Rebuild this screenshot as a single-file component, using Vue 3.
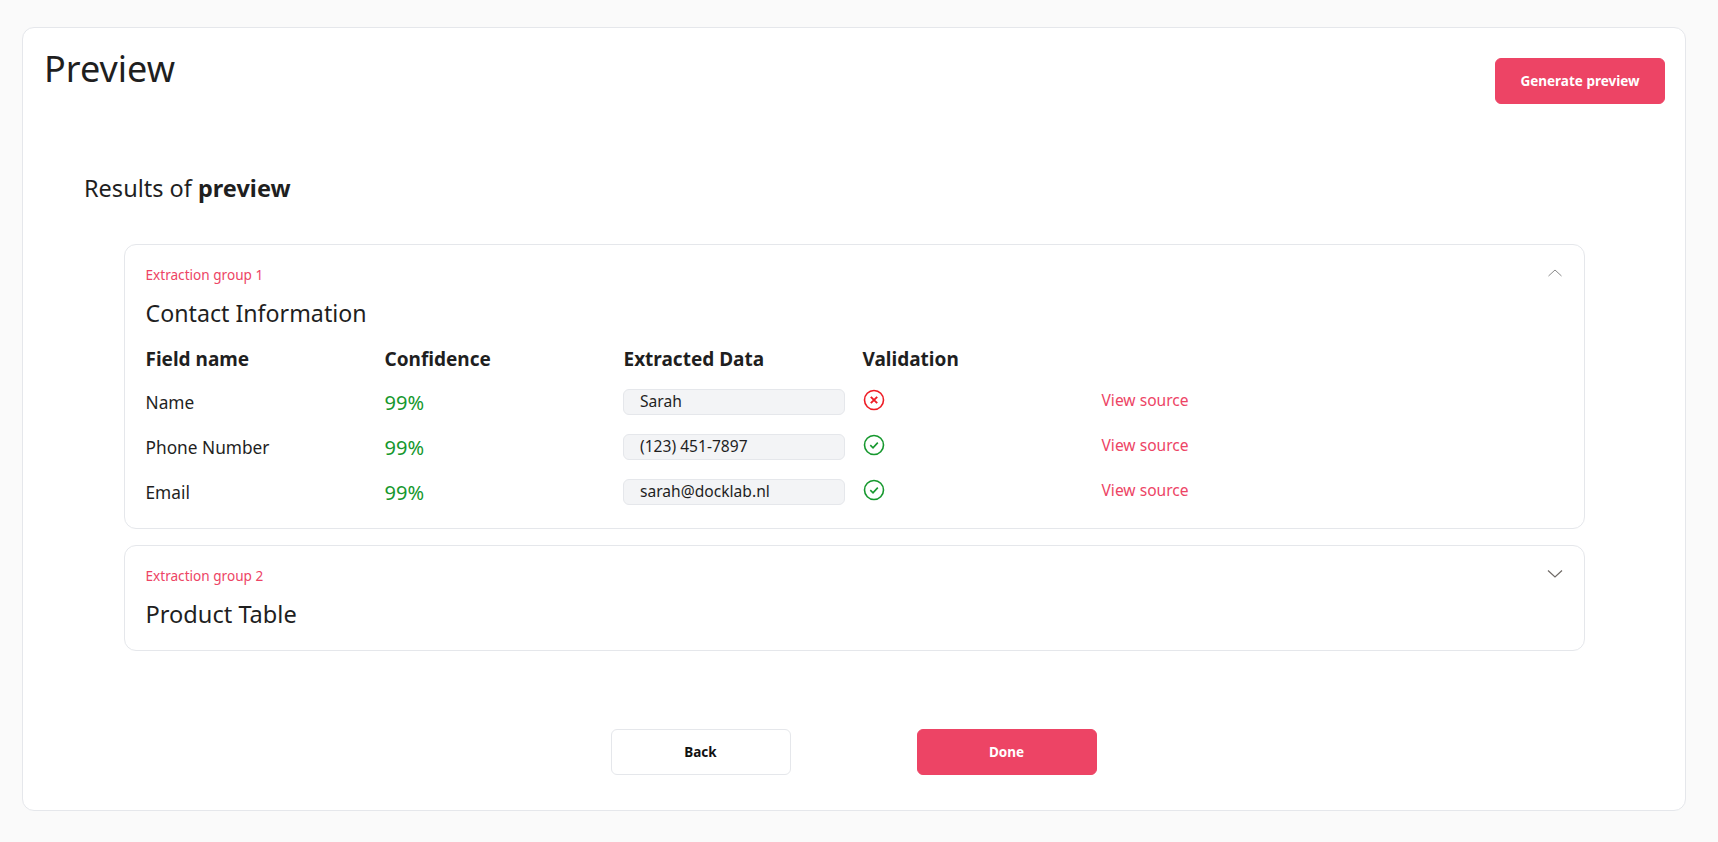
<template>
  <div class="page">
    <div class="card">
      <div class="card__head">
        <h1 class="card__title">Preview</h1>
        <button class="btn btn--primary btn--generate">Generate preview</button>
      </div>

      <div class="results">
        <h2 class="results__title">Results of <b>preview</b></h2>

        <div class="group group--open">
          <div class="group__label">Extraction group 1</div>
          <svg class="group__chevron" width="16" height="10" viewBox="0 0 16 10">
            <path d="M1.5 8 L8 2 L14.5 8" fill="none" stroke="#8a8a8a" stroke-width="1" />
          </svg>
          <div class="group__name">Contact Information</div>

          <div class="table">
            <div class="table__head">Field name</div>
            <div class="table__head">Confidence</div>
            <div class="table__head">Extracted Data</div>
            <div class="table__head">Validation</div>
            <div></div>

            <template v-for="row in rows" :key="row.name">
              <div class="table__name">{{ row.name }}</div>
              <div class="table__conf">{{ row.confidence }}</div>
              <div class="table__value">{{ row.value }}</div>
              <div class="table__valid">
                <svg width="22" height="22" viewBox="0 0 22 22" fill="none">
                  <circle cx="11" cy="11" r="9.5" :stroke="row.ok ? '#16982e' : '#ee1c25'" stroke-width="1.6" />
                  <path v-if="row.ok" d="M7.3 11.2 L10 13.8 L14.8 8.6" stroke="#16982e" stroke-width="1.6" />
                  <path v-else d="M7.8 7.8 L14.2 14.2 M14.2 7.8 L7.8 14.2" stroke="#ee1c25" stroke-width="1.9" />
                </svg>
              </div>
              <a class="table__link">View source</a>
            </template>
          </div>
        </div>

        <div class="group group--closed">
          <div class="group__label">Extraction group 2</div>
          <svg class="group__chevron" width="16" height="10" viewBox="0 0 16 10">
            <path d="M1 1.5 L8 8 L15 1.5" fill="none" stroke="#6f6a66" stroke-width="1.2" />
          </svg>
          <div class="group__name">Product Table</div>
        </div>
      </div>

      <div class="actions">
        <button class="btn btn--ghost">Back</button>
        <button class="btn btn--primary">Done</button>
      </div>
    </div>
  </div>
</template>

<script setup>
const rows = [
  { name: 'Name', confidence: '99%', value: 'Sarah', ok: false },
  { name: 'Phone Number', confidence: '99%', value: '(123) 451-7897', ok: true },
  { name: 'Email', confidence: '99%', value: 'sarah@docklab.nl', ok: true }
];
</script>

<style>
html, body {
  margin: 0;
  background: #fafafa;
}
</style>

<style scoped>
.page {
  height: 842px;
  box-sizing: border-box;
  padding: 27px 32px 31px 22px;
  font-family: "Noto Sans", sans-serif;
  color: #1f1f1f;
}

.card {
  height: 100%;
  box-sizing: border-box;
  background: #fff;
  border: 1px solid #e5e7eb;
  border-radius: 12px;
  padding: 0 20px 0 21px;
}

.card__head {
  display: flex;
  justify-content: space-between;
  align-items: flex-start;
  height: 100px;
}

.card__title {
  margin: 19px 0 0;
  font-size: 36px;
  line-height: 44px;
  font-weight: 400;
}

.btn {
  width: 180px;
  height: 46px;
  border-radius: 6px;
  font-family: inherit;
  font-size: 13.5px;
  font-weight: 700;
  cursor: pointer;
}

.btn--primary {
  background: #ed4465;
  border: 1px solid #ed4465;
  color: #fff;
}

.btn--ghost {
  background: #fff;
  border: 1px solid #e5e7eb;
  color: #111;
}

.btn--generate {
  width: 170px;
  margin-top: 30px;
}

.results {
  padding: 0 80px 0 40px;
}

.results__title {
  margin: 0;
  padding-top: 45px;
  font-size: 23.5px;
  line-height: 30px;
  font-weight: 400;
}

.results__title b {
  font-weight: 700;
}

.group {
  position: relative;
  margin: 0 0 16px 40px;
  padding: 20px 20px 20px 20.5px;
  border: 1px solid #e5e7eb;
  border-radius: 12px;
}

.results__title + .group {
  margin-top: 41px;
}

.group--open {
  padding-bottom: 13px;
}

.group--closed {
  padding-bottom: 21px;
}

.group__label {
  margin-top: 1px;
  font-size: 13.6px;
  line-height: 18px;
  color: #ed4465;
}

.group__chevron {
  position: absolute;
  top: 23px;
  right: 21px;
}

.group__name {
  margin-top: 14px;
  font-size: 23.2px;
  line-height: 30px;
}

.group--closed .group__name {
  font-size: 23.6px;
}

.table {
  display: grid;
  grid-template-columns: repeat(5, 239px);
  grid-template-rows: 44px;
  grid-auto-rows: 45px;
  align-items: center;
  margin-top: 8px;
}

.table__head {
  margin-top: 2px;
  font-size: 19px;
  font-weight: 700;
}

.table__name {
  font-size: 17.3px;
}

.table__conf {
  font-size: 20px;
  color: #16982e;
}

.table__value {
  width: 222px;
  height: 26px;
  box-sizing: border-box;
  margin: 0 0 2px -0.5px;
  padding-left: 16px;
  background: #f3f4f6;
  border: 1px solid #e5e7eb;
  border-radius: 6px;
  font-size: 15.6px;
  line-height: 22px;
}

.table__valid {
  display: flex;
  align-items: center;
  height: 22px;
  margin-bottom: 6px;
}

.table__link {
  margin-bottom: 6px;
  font-size: 15.6px;
  color: #ed4465;
}

.actions {
  display: flex;
  justify-content: center;
  gap: 126px;
  margin-top: 78px;
  padding-right: 2px;
}
</style>
